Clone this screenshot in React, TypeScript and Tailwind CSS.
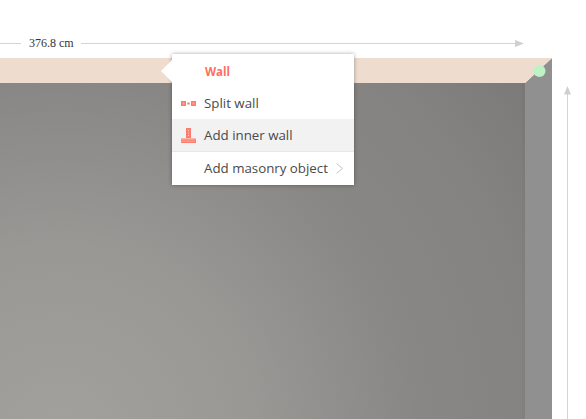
function SplitIcon() {
  return (
    <svg width="15" height="5" viewBox="0 0 15 5">
      <rect x="0" y="0" width="5" height="5" fill="#fb7d6e" />
      <rect x="10" y="0" width="5" height="5" fill="#fb7d6e" />
      <rect x="6.3" y="1.500" width="2.400" height="2" fill="#fb7d6e" />
      <rect x="1.500" y="1.500" width="2" height="2" fill="#fca99f" />
      <rect x="11.500" y="1.500" width="2" height="2" fill="#fca99f" />
    </svg>
  )
}

function InnerWallIcon() {
  return (
    <svg width="15" height="15" viewBox="0 0 15 15">
      <rect x="5" y="0" width="5" height="10" fill="#fb7d6e" />
      <rect x="7" y="2" width="1" height="1" fill="#fdd0ca" />
      <rect x="7" y="4.500" width="1" height="1" fill="#fdd0ca" />
      <rect x="7" y="7" width="1" height="1" fill="#fdd0ca" />
      <rect x="0" y="10.500" width="15" height="1" fill="#fb7d6e" />
      <rect x="0" y="11.500" width="15" height="3.500" fill="#fb7d6e" />
      <path d="M0.500 13.200h14" stroke="#fdd0ca" strokeWidth="1" strokeDasharray="1 1" />
    </svg>
  )
}

function Room() {
  return (
    <svg className="absolute inset-0" width="586" height="419" viewBox="0 0 586 419">
      <defs>
        <radialGradient id="floor" cx="60" cy="440" r="640" gradientUnits="userSpaceOnUse">
          <stop offset="0" stopColor="#a3a19e" />
          <stop offset="0.3" stopColor="#9a9895" />
          <stop offset="0.56" stopColor="#888785" />
          <stop offset="0.75" stopColor="#848381" />
          <stop offset="1" stopColor="#777674" />
        </radialGradient>
      </defs>
      <rect x="0" y="83" width="525" height="336" fill="url(#floor)" />
      <rect x="522" y="83" width="3" height="336" fill="#000" fillOpacity="0.02" />
      <path d="M552 58V419H525V83Z" fill="#909090" />
      <path d="M0 58H552L525 83H0Z" fill="#eedccf" />
      <circle cx="539.500" cy="71" r="6" fill="#bdf2c4" />
      {/* dimension lines */}
      <path d="M0 43.500H21M81 43.500H516" stroke="#d4d4d4" />
      <path d="M515 40L524 43.500L515 47Z" fill="#cfcfcf" />
      <path d="M567.500 94V419" stroke="#d4d4d4" />
      <path d="M564 94.500L567.500 86L571 94.500Z" fill="#cfcfcf" />
    </svg>
  )
}

export default function App() {
  return (
    <div className="relative w-[586px] h-[419px] overflow-hidden bg-white">
      <Room />
      <span className="absolute left-[29px] top-[36px] text-[12px] leading-[14px] text-[#333] font-['Liberation_Serif',serif]">
        376.8 cm
      </span>

      {/* context menu */}
      <div className="absolute left-[172px] top-[54px] w-[182px] bg-white shadow-[0_0_4px_rgba(0,0,0,0.35)] font-['Open_Sans',sans-serif] text-[13.300px] text-[#4a4a4a]">
        <div className="absolute -left-[11px] top-[6px] w-0 h-0 border-y-[11px] border-y-transparent border-r-[11px] border-r-white" />
        <div className="h-[33px] pl-[33px] pt-[2px] flex items-center text-[11.500px] font-bold text-[#ff6f5e]">Wall</div>
        <div className="h-[32px] flex items-center">
          <div className="w-[32px] pl-[9px] flex items-center"><SplitIcon /></div>
          <span className="pt-[2px]">Split wall</span>
        </div>
        <div className="h-[32px] flex items-center bg-[#f2f2f2]">
          <div className="w-[32px] pl-[9px] flex items-center"><InnerWallIcon /></div>
          <span className="pt-[2px]">Add inner wall</span>
        </div>
        <div className="h-[34px] flex items-center border-t border-[#e8e8e8]">
          <span className="pl-[32px]">Add masonry object</span>
          <svg className="ml-[8px]" width="7" height="11" viewBox="0 0 7 11" fill="none">
            <path d="M0.500 0.500L6.500 5.500L0.500 10.500" stroke="#c4c4c4" />
          </svg>
        </div>
      </div>
    </div>
  )
}
